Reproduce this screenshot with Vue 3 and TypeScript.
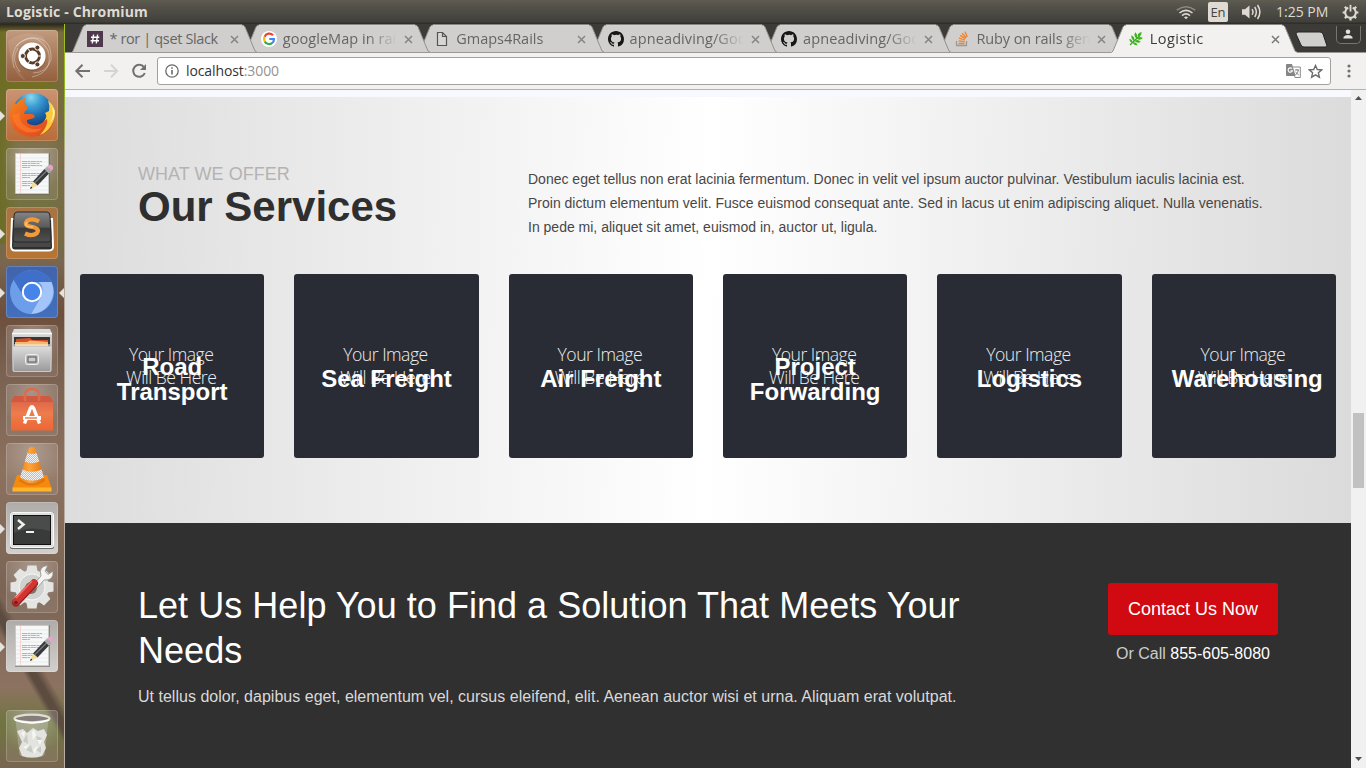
<script setup lang="ts">
interface Tab {
  title: string
  icon: string
  active?: boolean
  spacing: number
}

interface DockItem {
  name: string
  tint: string
  running?: boolean
  focused?: boolean
}

const tabs: Tab[] = [
  { title: '* ror | qset Slack', icon: 'slack', spacing: -0.36 },
  { title: 'googleMap in rai', icon: 'google', spacing: 0.05 },
  { title: 'Gmaps4Rails', icon: 'page', spacing: -0.02 },
  { title: 'apneadiving/Goo', icon: 'github', spacing: 0.1 },
  { title: 'apneadiving/Goo', icon: 'github', spacing: 0.1 },
  { title: 'Ruby on rails gen', icon: 'stack', spacing: -0.1 },
  { title: 'Logistic', icon: 'leaf', active: true, spacing: 0.4 },
]

const dock: DockItem[] = [
  { name: 'ubuntu', tint: 'copper' },
  { name: 'firefox', tint: 'orange', running: true },
  { name: 'editor', tint: 'clear' },
  { name: 'sublime', tint: 'amber', running: true },
  { name: 'chromium', tint: 'blue', running: true, focused: true },
  { name: 'files', tint: 'clear' },
  { name: 'software', tint: 'clear' },
  { name: 'vlc', tint: 'clear' },
  { name: 'terminal', tint: 'silver', running: true },
  { name: 'settings', tint: 'clear' },
  { name: 'editor', tint: 'silver', running: true },
  { name: 'trash', tint: 'clear' },
]

const services: string[] = ['Road Transport', 'Sea Freight', 'Air Freight', 'Project Forwarding', 'Logistics', 'Warehousing']
const gearAngles: number[] = [0, 45, 90, 135, 180, 225, 270, 315]
</script>

<template>
  <div class="screen">
    <header class="panel">
      <span class="window-title">Logistic - Chromium</span>
      <div class="indicators">
        <svg class="wifi" width="20" height="15" viewBox="0 0 20 15" fill="none" stroke="#dfdbd2" stroke-width="1.6">
          <path d="M.8 5.2Q10-1.8 19.2 5.2" stroke="#8d8a82" />
          <path d="M3.5 8Q10 2.8 16.5 8" />
          <path d="M6 10.6Q10 7.3 14 10.6" />
          <path d="M8 12.2Q10 10.6 12 12.2L10 14.2Z" fill="#dfdbd2" stroke="none" />
        </svg>
        <span class="lang">En</span>
        <svg class="sound" width="21" height="16" viewBox="0 0 21 16" fill="none" stroke="#dfdbd2" stroke-width="1.5">
          <path d="M1 5.2H4L8.5 1.5V14.5L4 10.8H1Z" fill="#dfdbd2" stroke="none" />
          <path d="M11 5.2Q13 8 11 10.8M13.7 3Q17 8 13.7 13M16.5 1Q21.3 8 16.5 15" />
        </svg>
        <span class="clock">1:25 PM</span>
        <svg class="session" width="17" height="17" viewBox="0 0 17 17" fill="none" stroke="#dfdbd2">
          <path d="M6.3 3.7A5.3 5.3 0 1 0 10.7 3.700" stroke-width="2" />
          <path d="M8.5 .8V7.500" stroke-width="1.800" />
          <path d="M2.800 2.800L4.500 4.500M14.200 2.800L12.500 4.500M.6 8.500H3.400M16.400 8.500H13.600M2.900 14.100L4.600 12.400M14.100 14.100L12.400 12.400M8.500 16.500V13.500" stroke-width="2.200" />
        </svg>
      </div>
    </header>

    <div class="desktop">
      <nav class="dock">
        <div v-for="(item, i) in dock" :key="i" class="tile" :class="[item.tint, { last: item.name === 'trash' }]">
          <span v-if="item.running" class="arrow left"></span>
          <span v-if="item.focused" class="arrow right"></span>
          <svg v-if="item.name === 'ubuntu'" width="52" height="52" viewBox="0 0 52 52" fill="none">
            <path d="M8 38Q2 12 26 8Q46 7 45 30Q40 43 27 43M10 16Q28-2 42 20Q48 42 26 47M14 42Q4 30 12 18" stroke="#fff" stroke-opacity=".35" />
            <path d="M2 11Q20-2 38 7L43 25Q36 10 22 11Q7 17 7 34L20 51Q5 44 2 11Z" fill="#fff" fill-opacity=".1" />
            <circle cx="26" cy="27.2" r="14" fill="#75543a" fill-opacity=".55" />
            <circle cx="26" cy="26" r="13.6" fill="#fff" />
            <circle cx="26.5" cy="26" r="6.9" stroke="#5a3d28" stroke-width="3" />
            <path d="M26.5 26H34.8M26.5 26L22.3 18.8M26.5 26L22.3 33.2" stroke="#fff" stroke-width="1" />
            <circle cx="26.5" cy="26" r="5.3" fill="#fff" />
            <g fill="#5a3d28" stroke="#fff" stroke-width=".9">
              <circle cx="16.8" cy="26" r="2.5" /><circle cx="31.4" cy="17.6" r="2.5" /><circle cx="31.4" cy="34.4" r="2.5" />
            </g>
          </svg>
          <svg v-else-if="item.name === 'firefox'" width="52" height="52" viewBox="0 0 52 52">
            <defs>
              <radialGradient id="globe" cx=".45" cy=".1" r=".75"><stop stop-color="#8bd8ee" /><stop offset=".3" stop-color="#3d9fd4" /><stop offset=".65" stop-color="#1c66a8" /><stop offset="1" stop-color="#113675" /></radialGradient>
              <linearGradient id="fox" x1="0" y1="0" x2="1" y2="1"><stop stop-color="#f58a1b" /><stop offset=".45" stop-color="#ec5e20" /><stop offset="1" stop-color="#d84a20" /></linearGradient>
            </defs>
            <circle cx="27" cy="25" r="21" fill="url(#globe)" />
            <path d="M43 22Q49 23 48 31Q45 45 30 47.500Q12 49 5.500 36Q2 25 6 18L7 12L10 15Q14 10 20 8.500Q18 12 18.500 15L21 17Q23 20 19 22L18 25H26Q30 26 28 29L21 31Q20 35 26 36Q34 37 38 32L41 29Z" fill="url(#fox)" />
            <path d="M42 11Q52 20 47.500 32Q43 43 34 46Q43 36 41 30L38 32Q42 27 39 24L43 22Q44 17 42 11Z" fill="#fbc93b" />
            <path d="M44 14Q50 24 44 34Q50 28 48.500 21Z" fill="#fff2a1" />
            <path d="M6 26Q8 39 20 43Q31 45 36 39Q26 43 17 35Q12 30 14 24Z" fill="#ff7d2b" opacity=".65" />
          </svg>
          <svg v-else-if="item.name === 'editor'" width="52" height="52" viewBox="0 0 52 52">
            <path d="M9 5H44V47H9Z" fill="#6d655e" opacity=".6" />
            <path d="M9.5 5.5H42.5V45.5H9.5Z" fill="#f8f8f7" stroke="#c9c9c6" />
            <path d="M14.5 6V45" stroke="#f7d3d0" />
            <path d="M10 10H42M10 14H42M10 18H42M10 22H42M10 26H42M10 30H42M10 34H42M10 38H42M10 42H42" stroke="#d7e1ea" stroke-width=".5" />
            <path d="M16 13.5H36M16 15.5H34M16 17.500H36M16 19.500H24M16 25.500H36M16 27.500H34M16 29.500H24M16 33.500H31M16 35.500H27M16 37.500H24" stroke="#9a9a9a" stroke-width=".7" stroke-dasharray="5 .5 3 .4" />
            <path d="M27 33.5L38.5 21L43 25.5L31.5 37.5Z" fill="#36383a" />
            <path d="M29 34.5L41 22.5" stroke="#777c80" stroke-width="1.3" />
            <path d="M27 33.5L24 41L31.5 37.5Z" fill="#f3dd91" /><path d="M25 38.5L24 41L26.5 40Z" fill="#222" />
            <path d="M38.5 21L41 18.5L45.5 23L43 25.5Z" fill="#aaa" /><path d="M41 18.5L43.5 16.5Q48 17 47 21L45.5 23Z" fill="#e6a3ca" />
          </svg>
          <svg v-else-if="item.name === 'sublime'" width="52" height="52" viewBox="0 0 52 52">
            <defs><linearGradient id="key" x2="0" y2="1"><stop stop-color="#858585" /><stop offset=".5" stop-color="#5a5a5a" /><stop offset=".55" stop-color="#3a3a3a" /><stop offset="1" stop-color="#505050" /></linearGradient></defs>
            <path d="M6 12L5 39Q5 43.5 9 43.5H43Q47.5 43.5 47 39L46 12Z" fill="#2d2e2e" stroke="#fff" stroke-width="2" />
            <path d="M7 40H45L44 33H8Z" fill="#484848" />
            <path d="M11 5H41Q44 5 44 9L45 32Q45 35 42 35H10Q7 35 7 32L8 9Q8 5 11 5Z" fill="url(#key)" stroke="#292929" />
            <path d="M33 14.5Q26 10.5 21 14Q17 19 27 20Q34 22 31 26Q26 30 19 26.5" fill="none" stroke="#f39a38" stroke-width="4.2" />
            <path d="M21 15Q17 20 27 20" fill="none" stroke="#ffc373" stroke-width="1.4" />
          </svg>
          <svg v-else-if="item.name === 'chromium'" width="52" height="52" viewBox="0 0 52 52">
            <circle cx="26" cy="26" r="22" fill="#6a9bea" />
            <path d="M7.5 14Q13 4 27 4Q40 5 45.5 16H26L16 28Z" fill="#3f6fc9" />
            <path d="M45.5 16Q50 27 44 37Q37 48 25 48L35 31Q39 21 33 16Z" fill="#a4c5f9" />
            <path d="M7.5 14Q1 28 9 40Q16 48 25 48L33 34Q21 37 16 28Z" fill="#6c9eea" />
            <circle cx="26" cy="26" r="9.2" fill="#4684e9" stroke="#fff" stroke-width="2" />
          </svg>
          <svg v-else-if="item.name === 'files'" width="52" height="52" viewBox="0 0 52 52">
            <defs><linearGradient id="metal" x2="0" y2="1"><stop stop-color="#ddd" /><stop offset="1" stop-color="#999" /></linearGradient></defs>
            <path d="M8 4H44L46 9V46H6V9Z" fill="url(#metal)" />
            <path d="M6 8.5H46" stroke="#f8f8f8" stroke-width="1.5" /><path d="M8 12H44V22H8Z" fill="#393634" />
            <path d="M10 14L24 13L26 15H42V21H10Z" fill="#d74d27" /><path d="M9 17H21L24 15.5L42 17V22H9Z" fill="#f4ba72" />
            <path d="M8 20H44" stroke="#fff3dc" />
            <path d="M6.5 21.5H45.5L44.5 46.5H7.5Z" fill="url(#metal)" stroke="#c9c9c9" />
            <rect x="19.5" y="29.5" width="13" height="10" rx="2" fill="#bcbcbc" stroke="#eee" /><rect x="22" y="32" width="8" height="5" fill="#ccc" stroke="#555" />
          </svg>
          <svg v-else-if="item.name === 'software'" width="52" height="52" viewBox="0 0 52 52">
            <defs><linearGradient id="bag" x2="0" y2="1"><stop stop-color="#e0684a" /><stop offset=".4" stop-color="#ee7c4c" /><stop offset="1" stop-color="#ec6633" /></linearGradient></defs>
            <path d="M8 12H44L47 18H5Z" fill="#cf5a40" /><path d="M5 18H47V46.5H5Z" fill="url(#bag)" />
            <path d="M19 17V10Q20 5 26 5Q32 5 33 10V17" fill="none" stroke="#e16b49" stroke-width="2.5" />
            <path d="M18.5 39.5L24.5 24Q26 21.5 27.5 24L33.5 39.5" fill="none" stroke="#fff" stroke-width="3.4" />
            <path d="M17 34H35" stroke="#fff" stroke-width="4" /><path d="M19 34H31" stroke="#e96c36" stroke-width="1.3" />
          </svg>
          <svg v-else-if="item.name === 'vlc'" width="52" height="52" viewBox="0 0 52 52">
            <defs>
              <linearGradient id="cone"><stop stop-color="#f08012" /><stop offset=".4" stop-color="#ffa43a" /><stop offset="1" stop-color="#e0700a" /></linearGradient>
              <pattern id="checks" width="2" height="2" patternUnits="userSpaceOnUse"><path d="M0 0H2V2H0Z" fill="#f2f2f2" /><path d="M0 0H1V1H0ZM1 1H2V2H1Z" fill="#bcbfc1" /></pattern>
            </defs>
            <path d="M11 32H41L45.5 45H6.5Z" fill="#f58a0c" /><path d="M6.5 44.5H45.5V48.5H6.5Z" fill="#ffb52c" />
            <path d="M23 5Q26 3 29 5L38.5 36Q26 46 13.5 36Z" fill="url(#cone)" />
            <path d="M21.5 10Q26 12 30.5 10L33.3 18.5Q26 22 18.7 18.5Z" fill="url(#checks)" /><path d="M16.5 26.5Q26 31 35.5 26.5L38 34.5Q26 41 14 34.5Z" fill="url(#checks)" />
            <path d="M13.5 36Q26 44 38.5 36L39 38Q26 47 13 38Z" fill="#c76011" opacity=".45" />
          </svg>
          <svg v-else-if="item.name === 'terminal'" width="52" height="52" viewBox="0 0 52 52">
            <rect x="4" y="10" width="44" height="37" rx="2" fill="#686868" /><rect x="4.5" y="10.5" width="43" height="35" rx="2" fill="#dededd" stroke="#f9f9f9" />
            <rect x="7.5" y="13.5" width="37" height="29" fill="#393b3b" stroke="#111" />
            <path d="M8 14H44V29Q24 23 8 31Z" fill="#fff" opacity=".09" />
            <path d="M12 18L17.5 22.5L12 27" fill="none" stroke="#f3f3ed" stroke-width="2.5" /><path d="M20 30H28" stroke="#f3f3ed" stroke-width="2" />
          </svg>
          <svg v-else-if="item.name === 'settings'" width="52" height="52" viewBox="0 0 52 52">
            <g fill="#e4e4e2"><path v-for="a in gearAngles" :key="a" d="M21.500 4.500H30.500L32 13H20Z" :transform="`rotate(${a} 26 26)`" /></g>
            <circle cx="26" cy="26" r="17" fill="#e4e4e2" /><circle cx="26" cy="26" r="13" fill="#d1d1cf" stroke="#f6f6f6" /><circle cx="25" cy="27" r="6" fill="#806f64" />
            <path d="M28 23L35 15Q32 5 42 4.5L39 10L42 13.5L47 10Q48 20 38 19L31 27Z" fill="#f4f4f4" stroke="#8b8b88" stroke-width=".8" />
            <path d="M10 41.5L28 22.5" stroke="#912522" stroke-width="8" stroke-linecap="round" /><path d="M10 40.5L28 21.5" stroke="#d33431" stroke-width="6.5" stroke-linecap="round" />
            <path d="M10 37L26 20" stroke="#ee716a" stroke-width="1.5" /><circle cx="10" cy="41.5" r="1.8" fill="#711e1c" />
          </svg>
          <svg v-else width="52" height="52" viewBox="0 0 52 52">
            <path d="M10 9L14 45Q26 50 38 45L42 9Z" fill="#d8d8d6" opacity=".3" stroke="#ddd" />
            <path d="M11 21L17 19L21 23L27 18L32 21L38 19L41 25L38 32L40 38L36 46Q26 49 16 46L13 38L16 32Z" fill="#e3e3df" />
            <path d="M21 24L17 31L22 34ZM30 26L36 28L32 33ZM25 35L20 40L27 43ZM35 36L30 40L35 43Z" fill="#c9cac5" />
            <path d="M15 23L19 21L18 27ZM26 22L28 20L30 25L27 30ZM31 30L36 30L34 35ZM17 37L23 34L20 39ZM27 40L32 35L29 44Z" fill="#f6f6f3" />
            <ellipse cx="26" cy="8.5" rx="17.5" ry="3.8" fill="#857e76" stroke="#deded8" stroke-width="2.2" /><path d="M9 10Q26 16 43 10" fill="none" stroke="#fff" stroke-width="1.4" />
          </svg>
        </div>
      </nav>

      <div class="browser">
        <div class="tabstrip">
          <div v-for="(tab, i) in tabs" :key="i" class="tab" :class="{ active: tab.active }" :style="{ zIndex: tab.active ? 20 : 10 - i }">
            <svg class="shape" width="187" height="29" viewBox="0 0 187 29">
              <path d="M0 29L2 27L12 3Q13 1 15 1H171Q173 1 174 3L184 27L187 29Z" :fill="tab.active ? '#f2f1f0' : '#d0cfcd'" />
              <path d="M.5 28.5L2 27L12 3Q13 1 15 1M171 1Q173 1 174 3L184 27L186.5 28.5" fill="none" stroke="#94928f" stroke-width="1" />
              <path d="M15 .8H171" stroke="#eeecea" stroke-width=".6" />
            </svg>
            <div class="tab-content">
              <svg class="favicon" width="16" height="16" viewBox="0 0 16 16">
                <template v-if="tab.icon === 'slack'">
                  <path d="M0 0H16V16H0Z" fill="#4d394b" /><path d="M6.6 3.5L5.3 12.5M10.6 3.5L9.3 12.5M4 6.3H12.3M3.6 9.7H12" stroke="#fff" stroke-width="1.4" />
                </template>
                <template v-else-if="tab.icon === 'google'">
                  <circle cx="8" cy="8" r="8" fill="#fff" />
                  <path d="M12 4.2A5 5 0 0 0 3.6 5.8" fill="none" stroke="#ea4335" stroke-width="2.2" /><path d="M3.6 5.8A5 5 0 0 0 3.7 10.4" fill="none" stroke="#fbbc05" stroke-width="2.2" />
                  <path d="M3.7 10.4A5 5 0 0 0 11.5 11.7" fill="none" stroke="#34a853" stroke-width="2.2" /><path d="M11.4 11.8Q13 10.3 13 8H8.3" fill="none" stroke="#4285f4" stroke-width="2.2" />
                </template>
                <path v-else-if="tab.icon === 'page'" d="M3.5 1.5H8.5L12.5 5.5V14.5H3.5ZM8.5 1.5V5.5H12.5" fill="#d7d6d4" stroke="#555" stroke-width="1.2" />
                <path v-else-if="tab.icon === 'github'" fill="#171515" d="M8 0C3.58 0 0 3.58 0 8c0 3.54 2.29 6.53 5.47 7.59.4.07.55-.17.55-.38 0-.19-.01-.82-.01-1.49-2.01.37-2.53-.49-2.69-.94-.09-.23-.48-.94-.82-1.13-.28-.15-.68-.52-.01-.53.63-.01 1.08.58 1.23.82.72 1.21 1.87.87 2.33.66.07-.52.28-.87.51-1.07-1.78-.2-3.64-.89-3.64-3.95 0-.87.31-1.59.82-2.15-.08-.2-.36-1.02.08-2.12 0 0 .67-.21 2.2.82A7.5 7.5 0 0 1 8 3.86c.68 0 1.36.09 2 .27 1.53-1.04 2.2-.82 2.2-.82.44 1.1.16 1.92.08 2.12.51.56.82 1.27.82 2.15 0 3.07-1.87 3.75-3.65 3.95.29.25.54.73.54 1.48 0 1.07-.01 1.93-.01 2.2 0 .21.15.46.55.38A8 8 0 0 0 16 8c0-4.42-3.58-8-8-8Z" />
                <template v-else-if="tab.icon === 'stack'">
                  <path d="M2.5 10V14.5H12.5V10" fill="none" stroke="#999" stroke-width="1.3" />
                  <path d="M4.5 12.5H10.5M4.6 9.9L10.6 10.6M5 7.2L10.9 9M6.1 4.4L11.4 7.6M8.2 2.2L12.2 6.8M11 .5L13.3 6" stroke="#f48024" stroke-width="1.3" />
                </template>
                <template v-else>
                  <path d="M2 14Q5 11 12 4.5" fill="none" stroke="#3d9a2c" stroke-width="1.1" />
                  <path d="M8.8 7.8Q5 5 7.3 1.300Q10.200 4 8.800 7.800ZM6.200 10.300Q2.500 7.500 3.500 4.300Q7.500 6.500 6.200 10.300ZM4.500 12Q1 10.500 1.500 7.800Q5.300 9 4.500 12ZM9.800 6.200Q9 2 13.500 1Q14 4.800 9.800 6.200ZM8.800 7.800Q11.500 4.500 14.800 7Q12.300 9.800 8.800 7.800ZM6.500 9.800Q10 7.800 12.800 10.900Q9.300 12.800 6.500 9.800ZM4.800 11.500Q8.300 10.700 9.600 14.200Q5.800 14.800 4.800 11.500Z" fill="#3cb41e" />
                </template>
              </svg>
              <span class="tab-title" :style="{ letterSpacing: tab.spacing + 'px' }">{{ tab.title }}</span>
              <svg class="close" width="9" height="9" viewBox="0 0 9 9"><path d="M1 1L8 8M8 1L1 8" :stroke="tab.active ? '#77797a' : '#858583'" stroke-width="1.5" /></svg>
            </div>
          </div>
          <svg class="new-tab" width="34" height="18" viewBox="0 0 34 18"><path d="M3 1H25Q27 1 28 3L32 15Q32 16 30 16H9Q7 16 6 14L1 3Q1 1 3 1Z" fill="#d0cfcd" stroke="#252421" /></svg>
          <div class="profile">
            <svg width="10" height="10" viewBox="0 0 10 10" fill="#e4e1d9"><circle cx="5" cy="2.7" r="2.3" /><path d="M.5 9.5V8Q2 6 5 6T9.5 8V9.5Z" /></svg>
          </div>
        </div>

        <div class="toolbar">
          <svg class="nav-icons" width="76" height="18" viewBox="0 0 76 18" fill="none" stroke-width="2">
            <path d="M16 9H2.5M8.5 2.8L2.3 9L8.5 15.2" stroke="#717171" />
            <path d="M30 9H43M37 2.8L43.2 9L37 15.2" stroke="#d5d4d3" />
            <path d="M70 5.2A6 6 0 1 0 70.8 11" stroke="#717171" /><path d="M72 2V8H66Z" fill="#717171" stroke="none" />
          </svg>
          <div class="omnibox">
            <svg width="14" height="14" viewBox="0 0 14 14" fill="none" stroke="#68696a" stroke-width="1.3"><circle cx="7" cy="7" r="6.2" /><path d="M7 6V10.4M7 3.2V4.8" stroke-width="1.6" /></svg>
            <span class="url">localhost<i>:3000</i></span>
            <svg class="translate" width="15" height="14" viewBox="0 0 15 14">
              <path d="M6 3H14.3V13.5H9Z" fill="#fff" stroke="#8a8a8a" /><path d="M1 0H6L9.5 12H1Q0 12 0 11V1Q0 0 1 0Z" fill="#858585" />
              <path d="M6 4.6A2.2 2.2 0 1 0 6.4 6.8H4.4" fill="none" stroke="#fff" stroke-width="1.1" /><path d="M8.8 6H13M11 5V6M12.4 6Q12 9 9.5 11M9.5 8L12.8 11" fill="none" stroke="#777" stroke-width=".9" />
            </svg>
            <svg width="15" height="15" viewBox="0 0 15 15"><path d="M7.5 1.5L9.3 5.5L13.7 5.9L10.4 8.8L11.4 13.2L7.5 10.9L3.6 13.2L4.6 8.8L1.3 5.9L5.7 5.5Z" fill="none" stroke="#6c6c6c" stroke-width="1.4" /></svg>
          </div>
          <svg class="menu" width="4" height="14" viewBox="0 0 4 14" fill="#717171"><circle cx="2" cy="2" r="1.6" /><circle cx="2" cy="7" r="1.6" /><circle cx="2" cy="12" r="1.6" /></svg>
        </div>

        <div class="viewport">
          <main class="page">
            <section class="services">
              <div class="intro">
                <div class="heading">
                  <p class="eyebrow">WHAT WE OFFER</p>
                  <h1>Our Services</h1>
                </div>
                <p class="lead">Donec eget tellus non erat lacinia fermentum. Donec in velit vel ipsum auctor pulvinar. Vestibulum iaculis lacinia est. Proin dictum elementum velit. Fusce euismod consequat ante. Sed in lacus ut enim adipiscing aliquet. Nulla venenatis. In pede mi, aliquet sit amet, euismod in, auctor ut, ligula.</p>
              </div>
              <div class="cards">
                <article v-for="service in services" :key="service" class="card">
                  <p class="placeholder"><span>Your Image</span><span>Will Be Here</span></p>
                  <h2><span>{{ service }}</span></h2>
                </article>
              </div>
            </section>
            <section class="cta">
              <div class="pitch">
                <h3>Let Us Help You to Find a Solution That Meets Your Needs</h3>
                <p>Ut tellus dolor, dapibus eget, elementum vel, cursus eleifend, elit. Aenean auctor wisi et urna. Aliquam erat volutpat.</p>
              </div>
              <div class="contact">
                <button type="button">Contact Us Now</button>
                <p>Or Call <b>855-605-8080</b></p>
              </div>
            </section>
          </main>
          <div class="scrollbar">
            <svg width="7" height="4" viewBox="0 0 7 4"><path d="M0 4L3.5 0L7 4Z" fill="#505050" /></svg>
            <div class="thumb"></div>
            <svg width="7" height="4" viewBox="0 0 7 4"><path d="M0 0L3.5 4L7 0Z" fill="#505050" /></svg>
          </div>
        </div>
      </div>
    </div>
  </div>
</template>

<style scoped>
.screen { width: 1366px; height: 768px; overflow: hidden; display: flex; flex-direction: column; font-family: "Liberation Sans", Arial, sans-serif; }
.screen * { box-sizing: border-box; }
svg { display: block; flex: none; }
p, h1, h2, h3 { margin: 0; }
.panel { height: 24px; flex: none; display: flex; justify-content: space-between; align-items: center; padding: 0 7px 0 6px; background: linear-gradient(#5f5c50 0, #58564e 3px, #403f3a 22px, #302e29 23px); color: #dfdbd2; font-family: "Open Sans", "Noto Sans", sans-serif; font-size: 14px; }
.window-title { height: 24px; line-height: 23px; font-size: 14px; font-weight: 700; letter-spacing: .15px; }
.indicators { display: flex; align-items: center; }
.lang { width: 20px; height: 20px; margin: 0 13px 0 12px; border-radius: 2px; background: #dfdbd2; color: #45443e; font-size: 13px; line-height: 20px; text-align: center; }
.clock { width: 54px; height: 24px; line-height: 23px; margin: 0 12px 0 14px; white-space: nowrap; letter-spacing: 0; }
.desktop { flex: 1; display: flex; min-height: 0; }
.dock { width: 65px; flex: none; padding: 6px 0 6px 6px; display: flex; flex-direction: column; gap: 7px; border-right: 1px solid #a9a39d; border-image: linear-gradient(#a5c51e 0, #8db316 8%, #b6aa9e 20%, #b9aea5 100%) 1; background: linear-gradient(#2b271d 0, transparent 8px), linear-gradient(90deg, #6d6d27 0, transparent 30%, transparent 75%, #776b45) 0 0 / 100% 220px no-repeat, linear-gradient(60deg, transparent 0 48%, #5c4c40 52% 56%, transparent 62%) 0 100% / 100% 170px no-repeat, linear-gradient(#766d32 0, #727020 11%, #85735b 18%, #6f703b 26%, #796650 32%, #6c4f3c 39%, #79604f 46%, #8c715f 60%, #7b6454 76%, #8d7261 89%, #6f7540 94%, #796550); }
.tile { position: relative; width: 52px; height: 52px; flex: none; border-radius: 4px; border: 1px solid #ffffff30; }
.tile svg { margin: -1px; }
.tile.last { margin-top: auto; }
.copper { background: linear-gradient(#c19a7d, #935f3e) border-box; }
.orange { background: linear-gradient(#cb9374, #b86d38) border-box; }
.clear { background: radial-gradient(circle at 50% 15%, #ffffff50, #ffffff16 70%) border-box; }
.amber { background: linear-gradient(#a77444, #b77434) border-box; }
.blue { background: linear-gradient(#4164ab, #426fbd) border-box; }
.silver { background: linear-gradient(#aeaba8, #d2d0ce) border-box; }
.arrow { position: absolute; top: 21px; width: 0; height: 0; border: 5px solid transparent; }
.arrow.left { left: -7px; border-left-color: #e6e3df; border-right: 0; }
.arrow.right { right: -7px; border-right-color: #e6e3df; border-left: 0; }
.browser { flex: 1; min-width: 0; display: flex; flex-direction: column; }
.tabstrip { height: 29px; flex: none; display: flex; align-items: flex-start; padding-left: 6px; background: #3c3b37; box-shadow: inset 0 -1px #9b9996; font-family: "Open Sans", "Noto Sans", sans-serif; }
.tab { position: relative; width: 187px; height: 29px; flex: none; margin-right: -13.6px; }
.tab:not(.active)::after { content: ""; position: absolute; left: 1px; right: 1px; bottom: 0; height: 1px; background: #9b9996; }
.shape { position: absolute; inset: 0; }
.tab-content { position: relative; height: 29px; display: flex; align-items: center; padding-left: 16.4px; }
.tab-title { width: 117px; height: 20px; margin: 1px 4px 0 6px; overflow: hidden; white-space: nowrap; color: #666564; font-size: 14.5px; line-height: 20px; -webkit-mask-image: linear-gradient(90deg, #000 84px, transparent 114px); mask-image: linear-gradient(90deg, #000 84px, transparent 114px); }
.tab:first-child .tab-title { -webkit-mask-image: none; mask-image: none; }
.active .tab-title { color: #3c3c3c; }
.close { margin-top: 1px; }
.new-tab { margin: 7px 0 0 10px; }
.profile { width: 25px; height: 18px; margin: 2px 0 0 7px; display: flex; justify-content: center; padding-top: 3px; border: 1px solid #777570; border-top: 0; border-radius: 0 0 5px 5px; background: #373632; }
.toolbar { height: 37px; flex: none; display: flex; align-items: center; padding: 0 15px 0 9px; background: #f2f1f0; border-bottom: 1px solid #b5b1b3; }
.omnibox { width: 1174px; height: 28px; margin-left: 7px; padding: 0 7px; display: flex; align-items: center; border: 1px solid #a3a1a0; border-radius: 3px; background: #fff; }
.url { height: 20px; line-height: 19px; margin-left: 7px; flex: 1; font-family: "Open Sans", "Noto Sans", sans-serif; font-size: 14px; color: #333; letter-spacing: -.1px; }
.url i { font-style: normal; color: #96918f; }
.translate { margin-right: 7px; }
.menu { margin-left: 16px; }
.viewport { flex: 1; min-height: 0; display: flex; background: #f8f9fc; }
.page { flex: 1; min-width: 0; padding-top: 7px; display: flex; flex-direction: column; }
.services { height: 426px; flex: none; padding: 66px 15px 0; background: linear-gradient(91deg, #dcdcdc, #fff 50%, #dbdbdb); }
.intro { display: flex; height: 111px; padding-left: 58px; }
.heading { width: 390px; flex: none; padding-top: 1px; }
.eyebrow { font-size: 18px; line-height: 21px; color: #b3b3b3; letter-spacing: .04px; }
h1 { font-size: 42px; line-height: 44px; color: #2f2f2f; }
.lead { width: 740px; padding-top: 4px; font-size: 14px; line-height: 24px; color: #474747; }
.cards { display: grid; grid-template-columns: repeat(6, 1fr); gap: 30px; }
.card { position: relative; height: 184px; border-radius: 3px; background: #292c34; color: #fff; text-align: center; }
.placeholder { padding-top: 69px; padding-right: 2px; font-family: "Open Sans", "Noto Sans", sans-serif; font-weight: 300; font-size: 17.6px; line-height: 23px; letter-spacing: -.5px; color: #eeeff0; }
.placeholder span { display: block; }
h2 { position: absolute; inset: 25px 20px 0; display: flex; align-items: center; font-size: 24px; line-height: 25px; }
h2 span { flex: none; width: 100%; }
.cta { flex: 1; display: flex; justify-content: space-between; padding: 60px 73px 0; background: #303030; color: #fff; }
.pitch { width: 850px; }
h3 { font-size: 36px; line-height: 45px; font-weight: 400; letter-spacing: .035px; }
.pitch p { margin-top: 12px; font-size: 16px; line-height: 24px; letter-spacing: .017px; color: #d9d9d9; }
.contact { width: 170px; text-align: center; }
button { display: block; width: 170px; height: 52px; padding: 0; border: 0; border-radius: 3px; background: #d10a11; color: #fff; font: 18px "Liberation Sans", Arial, sans-serif; }
.contact p { margin-top: 7px; font-size: 16px; line-height: 24px; white-space: nowrap; color: #ccc; }
.contact b { font-weight: 400; color: #fff; }
.scrollbar { width: 15px; flex: none; display: flex; flex-direction: column; align-items: center; padding: 6px 0 7px; background: #f1f1f1; }
.thumb { width: 11px; height: 75px; margin-top: 313px; margin-bottom: auto; background: #c1c1c1; }
</style>

<style>
body { margin: 0; overflow: hidden; }
</style>
